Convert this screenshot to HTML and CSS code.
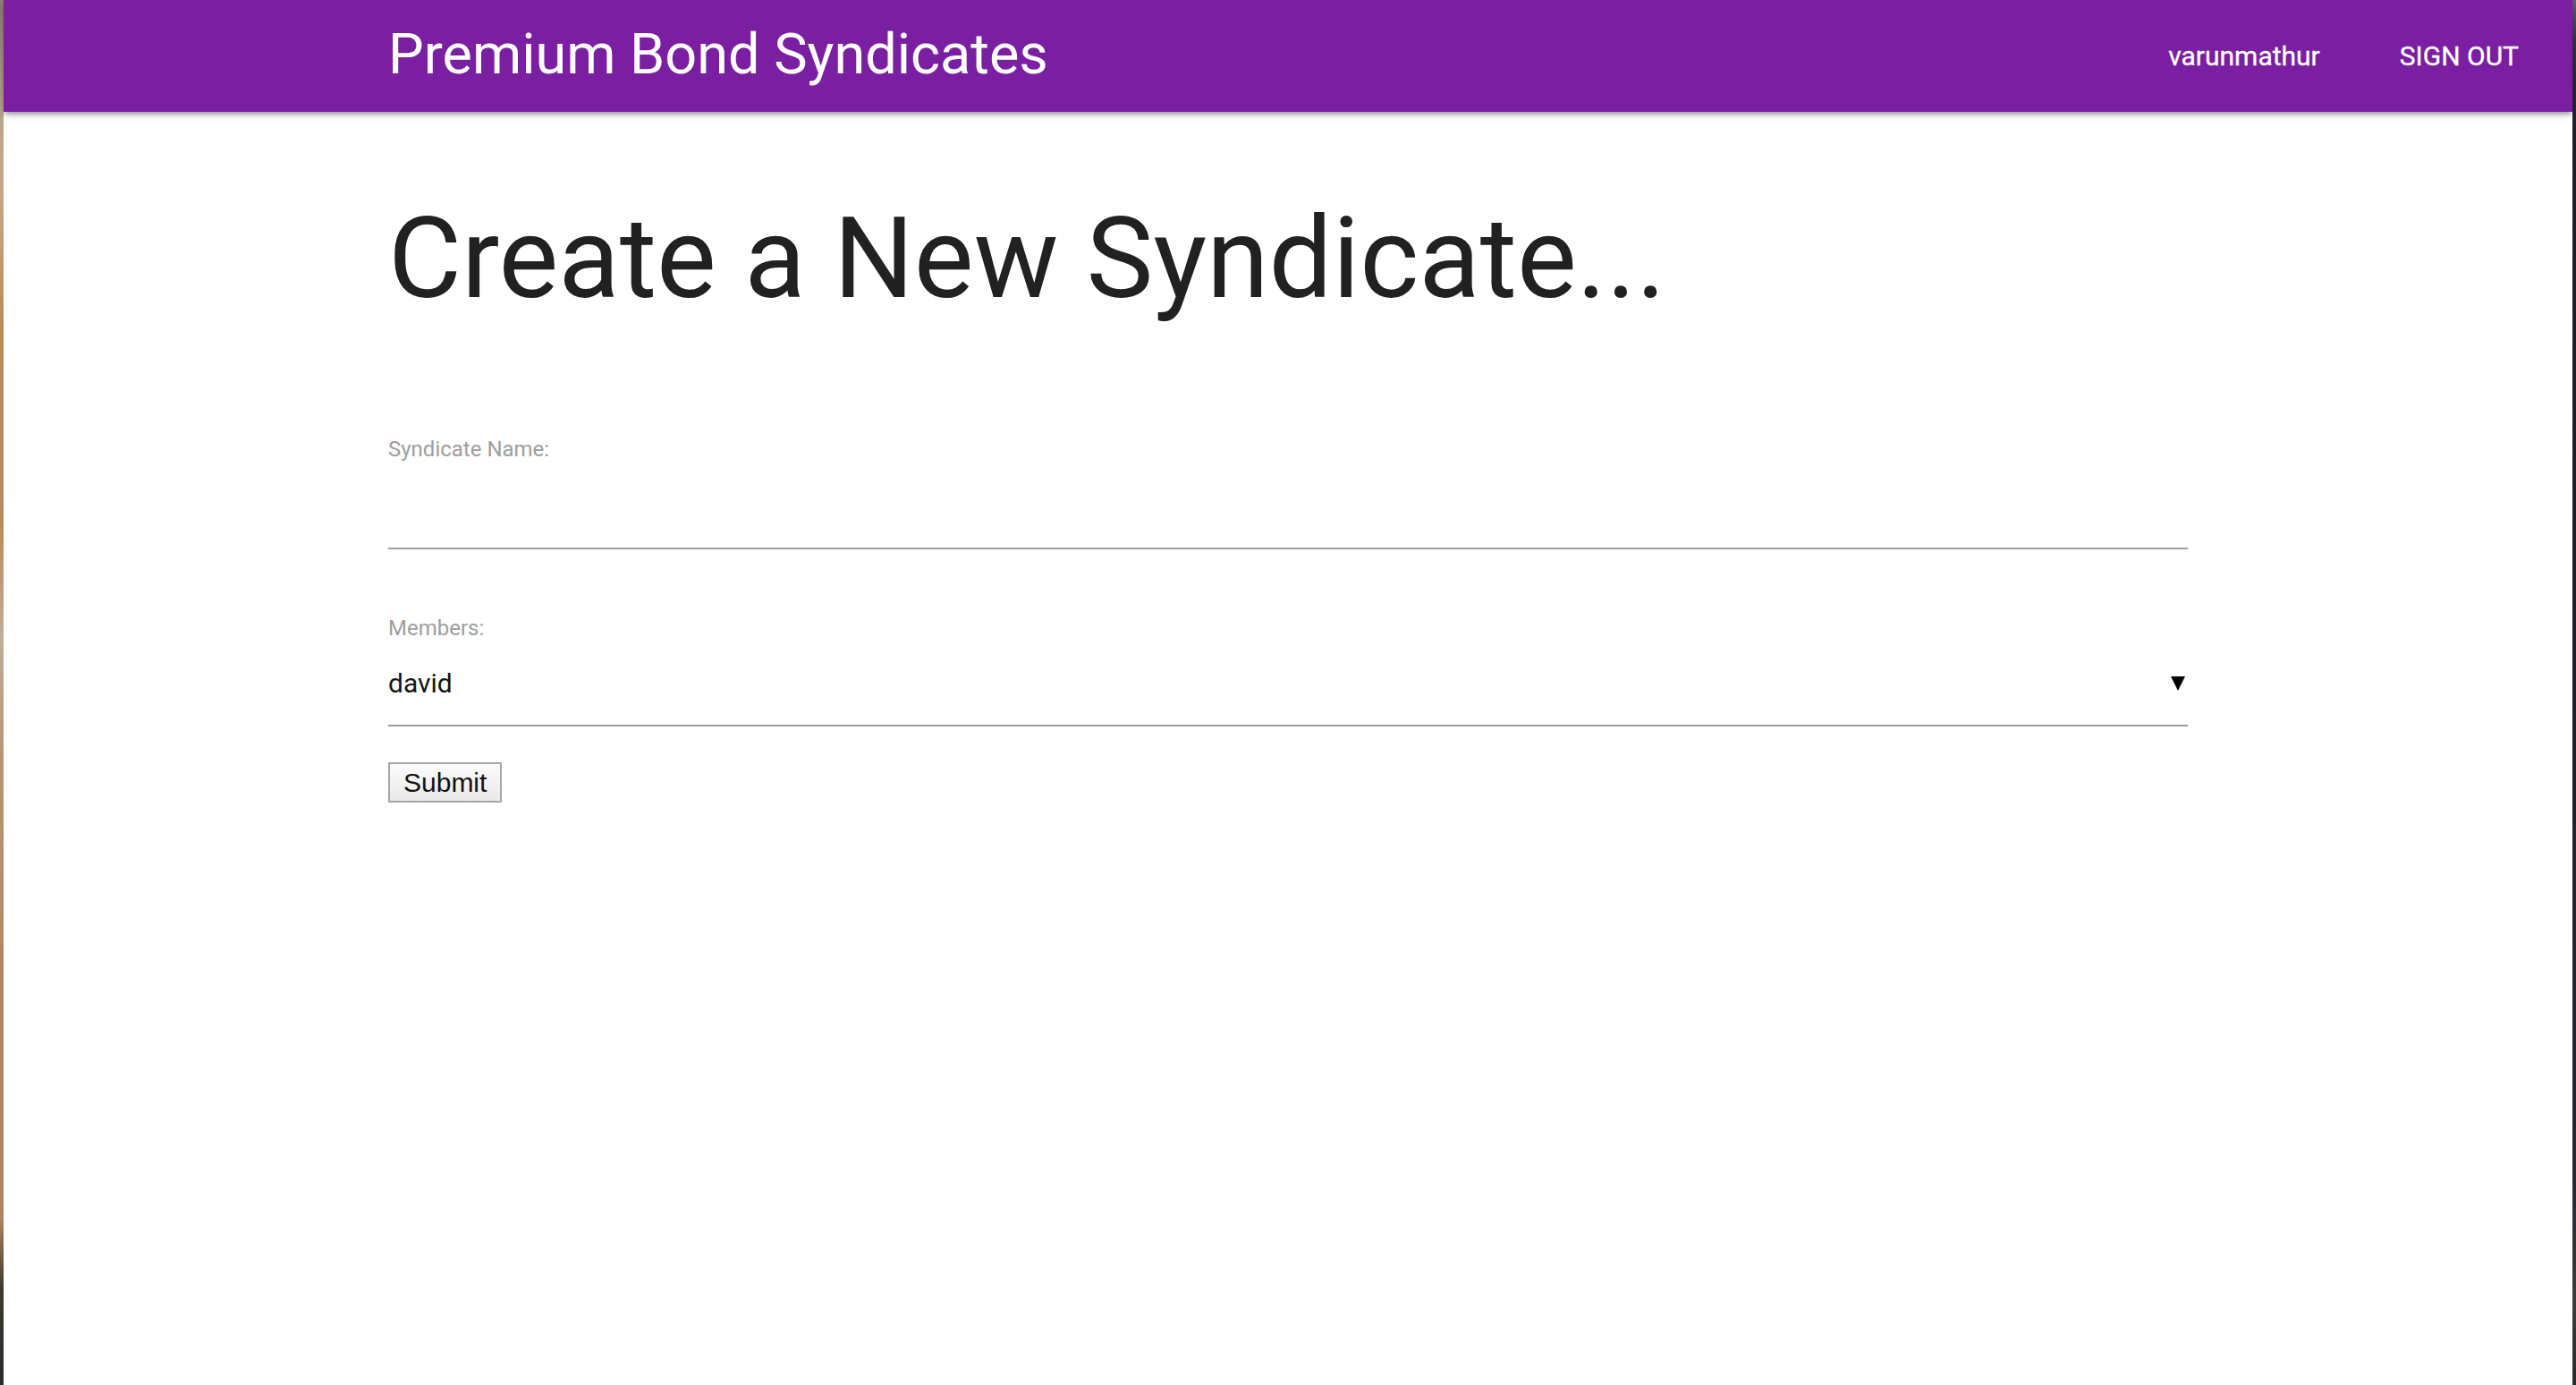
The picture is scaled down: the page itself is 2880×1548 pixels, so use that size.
FILE: index.html
```html
<!DOCTYPE html>
<html lang="en">
<head>
<meta charset="utf-8">
<title>Premium Bond Syndicates</title>
<link rel="stylesheet" href="styles.css">
</head>
<body>
<div class="desk">
  <div class="edge edge-left"></div>
  <div class="window">
    <nav class="navbar">
      <a class="brand" href="#">Premium Bond Syndicates</a>
      <ul class="nav-links">
        <li><a href="#">varunmathur</a></li>
        <li><a href="#">SIGN OUT</a></li>
      </ul>
    </nav>
    <main class="container">
      <h1 class="page-title">Create a New Syndicate...</h1>
      <form class="form">
        <div class="field field-name">
          <label class="field-label" for="name">Syndicate Name:</label>
          <input class="text-input" id="name" type="text">
        </div>
        <div class="field field-members">
          <label class="field-label">Members:</label>
          <div class="select">
            <span class="select-value">david</span>
            <svg class="select-arrow" width="16" height="16" viewBox="0 0 16 16"><polygon points="0,0 16,0 8,16" fill="#000"/></svg>
          </div>
        </div>
        <button class="submit" type="button">Submit</button>
      </form>
    </main>
  </div>
  <div class="edge edge-right"></div>
</div>
</body>
</html>
```

FILE: styles.css
```css
html, body {
  margin: 0;
  padding: 0;
}

body {
  font-family: Roboto, "Liberation Sans", sans-serif;
  background: #1c1e26;
}

.desk {
  display: flex;
  height: 100vh;
}

.edge {
  width: 4px;
  flex: 0 0 4px;
}

.edge-left {
  background: linear-gradient(to bottom,
    #8f7e74 0%, #b8a68e 8%, #c4a888 14%, #b98c58 24%, #b88d5d 38%,
    #bfae98 46%, #b59676 55%, #b08963 70%, #ae8561 88%,
    #3d3833 93%, #2c2b2a 100%);
}

.edge-right {
  background: linear-gradient(to bottom,
    #6b5d79 0%, #3a3444 3%, #1b1d25 10%, #1d2029 50%,
    #262931 85%, #3c3b3a 94%, #2a2a2c 100%);
}

.window {
  flex: 1;
  background: #ffffff;
  display: flex;
  flex-direction: column;
}

/* Navbar */
.navbar {
  position: relative;
  z-index: 2;
  height: 125px;
  background: #7b1fa2;
  display: flex;
  align-items: flex-start;
  justify-content: space-between;
  padding-left: 430px;
  box-shadow: 0 4px 4px 0 rgba(0,0,0,0.14), 0 6px 2px -4px rgba(0,0,0,0.12), 0 2px 10px 0 rgba(0,0,0,0.2);
}

.brand {
  color: #ffffff;
  text-decoration: none;
  font-size: 63px;
  line-height: 121px;
  white-space: nowrap;
}

.nav-links {
  list-style: none;
  margin: 0 30px 0 0;
  padding: 0;
  display: flex;
  height: 125px;
}

.nav-links li + li {
  margin-left: 29px;
}

.nav-links a {
  display: block;
  padding: 0 30px;
  color: #ffffff;
  text-decoration: none;
  font-size: 30px;
  line-height: 125px;
  white-space: nowrap;
  -webkit-text-stroke: 0.3px #ffffff;
}

/* Content */
.container {
  padding-left: 430px;
}

.page-title {
  margin: 89px 0 0;
  font-size: 126px;
  font-weight: 400;
  line-height: 150px;
  color: #212121;
  white-space: nowrap;
}

.form {
  width: 2012px;
}

.field-name {
  margin-top: 123px;
}

.field-members {
  margin-top: 73px;
}

.field-label {
  display: block;
  font-size: 24px;
  line-height: 30px;
  color: #9e9e9e;
}

.text-input {
  display: block;
  box-sizing: content-box;
  width: 100%;
  height: 95px;
  margin: 0;
  padding: 0;
  border: none;
  border-bottom: 2px solid #9e9e9e;
  background: transparent;
  outline: none;
  font-family: Roboto, sans-serif;
  font-size: 30px;
}

.select {
  display: flex;
  align-items: center;
  justify-content: space-between;
  height: 93px;
  border-bottom: 2px solid #9e9e9e;
  padding-right: 3px;
}

.select-value {
  font-size: 30px;
  line-height: 93px;
  color: #151515;
}

.select-arrow {
  display: block;
}

.submit {
  display: block;
  margin-top: 40px;
  box-sizing: border-box;
  height: 45px;
  padding: 0 15px;
  border: 2px solid #a6a6a6;
  border-radius: 1px;
  background: linear-gradient(to bottom, #fbfbfb, #e9e9e9);
  font-family: "Liberation Sans", Arial, sans-serif;
  font-size: 30px;
  color: #111111;
}
```
